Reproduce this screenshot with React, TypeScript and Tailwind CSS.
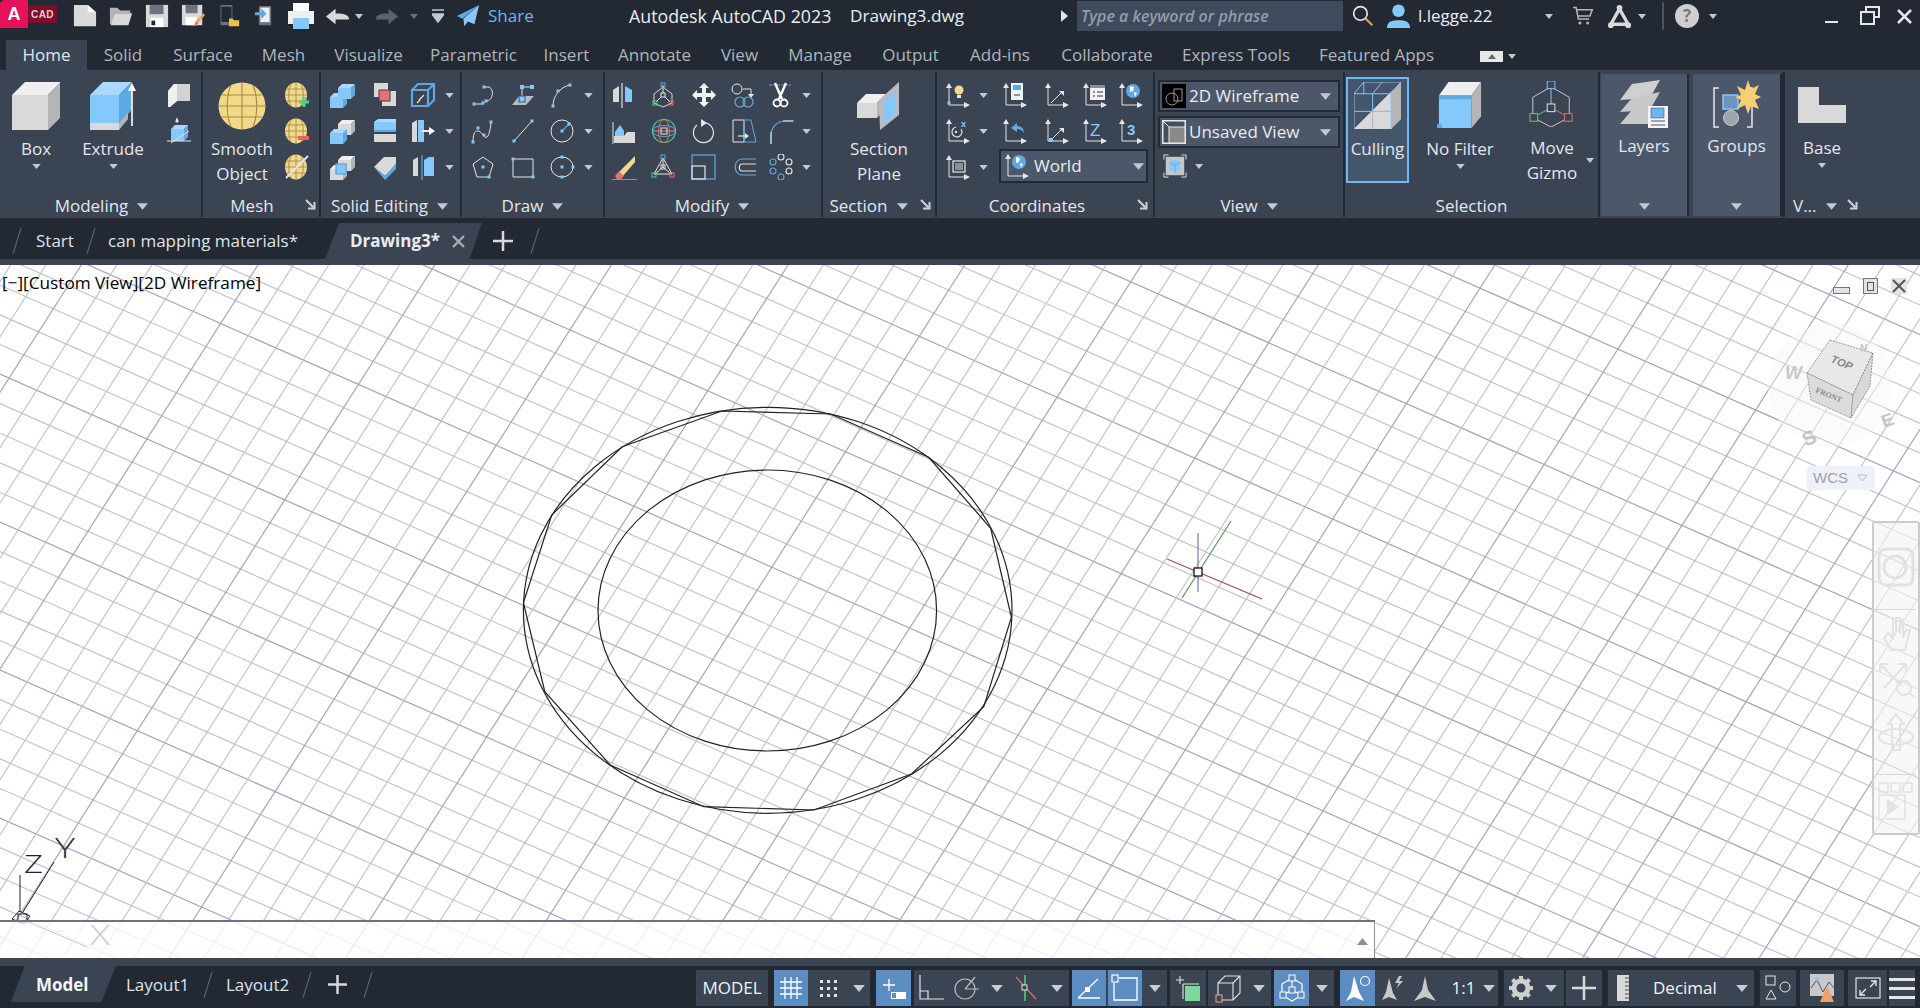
import React from 'react';

const G = '#d9d9d9', L = '#efefef', D = '#b5b5b5', B = '#85c8fb', BD = '#5fa9e3', BL = '#a9d9fd', E = '#e6e6e6', Y = '#f2d98a', YD = '#a98a45';

const Cube = ({ x, y, w, h, d, f = G, t = L, s = D }: { x: number; y: number; w: number; h: number; d: number; f?: string; t?: string; s?: string }) => (
  <>
    <polygon points={`${x},${y + d} ${x + d},${y} ${x + w + d},${y} ${x + w},${y + d}`} fill={t} />
    <polygon points={`${x + w},${y + d} ${x + w + d},${y} ${x + w + d},${y + h} ${x + w},${y + h + d}`} fill={s} />
    <rect x={x} y={y + d} width={w} height={h} fill={f} />
  </>
);

const I = ({ s = 26, v = 26, h, children }: { s?: number; v?: number; h?: number; children: React.ReactNode }) => (
  <svg width={s} height={h ?? s} viewBox={`0 0 ${v} ${v}`} fill="none" className="block shrink-0">{children}</svg>
);

const Caret = ({ w = 9, c = '#c4c9d1' }: { w?: number; c?: string }) => (
  <svg width={w} height={Math.round(w * 0.6)} viewBox="0 0 10 6" className="block shrink-0"><path d="M0 0h10L5 6z" fill={c} /></svg>
);

const Launcher = () => (
  <svg width="11" height="11" viewBox="0 0 11 11" className="block"><path d="M1 1l7 7M9.5 3v6.5H3" stroke="#cfd3d8" strokeWidth="2" fill="none" /></svg>
);

const Slash = ({ h = 'h-[26px]' }: { h?: string }) => (
  <svg viewBox="0 0 10 26" preserveAspectRatio="none" className={`w-[10px] shrink-0 ${h}`}><path d="M1 26L9 0" stroke="#56606e" strokeWidth="1.2" /></svg>
);

const Pt = ({ x, y, s = 3, c = B }: { x: number; y: number; s?: number; c?: string }) => <rect x={x - s / 2} y={y - s / 2} width={s} height={s} fill={c} />;

const Sphere = ({ extra }: { extra?: React.ReactNode }) => (
  <I s={26}>
    <ellipse cx="12" cy="13" rx="11" ry="12.5" fill={Y} />
    <path d="M1 13h22M2.5 7h19M2.5 19h19M12 1v24M7 2c-3 6-3 16 0 22M17 2c3 6 3 16 0 22" stroke={YD} strokeWidth=".9" />
    {extra}
  </I>
);

function Ax() {
  return <><path d="M4 4v19h16" stroke={E} strokeWidth="1" /><path d="M1 6l3-5 3 5z" fill={E} /><path d="M19 20l6 3-6 3z" fill={E} /></>;
}

/* ribbon small icons */
const icons: Record<string, React.ReactNode> = {
  polysolid: <I><path d="M2 9l6-7h16v17H11l-7 6H2z" fill="#d2d2d2" /><path d="M8 2h3v17l-7 6H2V9z" fill="#f0f0f0" /></I>,
  planecube: <I><Cube x={5} y={7} w={13} h={12} d={4} f={B} t={BL} s={BD} /><path d="M1 23h24M5 25L23 13M11 5V0" stroke={E} strokeWidth="1" /><path d="M9 4l2-4 2 4z" fill={E} /></I>,
  meshPlus: <Sphere extra={<path d="M15 20h10M20 15v10" stroke="#55d083" strokeWidth="3" />} />,
  meshMinus: <Sphere extra={<rect x="14" y="18" width="11" height="4" fill="#e8635f" />} />,
  meshSlash: <Sphere extra={<path d="M2 24L24 2" stroke="#e6e6e6" strokeWidth="2" />} />,
  union: <I><Cube x={1} y={11} w={13} h={11} d={4} f={B} t={BL} s={BD} /><Cube x={9} y={2} w={13} h={11} d={4} f={B} t={BL} s={BD} /></I>,
  subtract: <I><rect x="2" y="1" width="14" height="14" fill={G} /><rect x="10" y="9" width="14" height="15" fill={G} /><rect x="7" y="8" width="11" height="11" fill="#e8706d" stroke="#3b4453" strokeWidth="1" /></I>,
  wirecube: <I><path d="M2 8l6-6h16v16l-6 6H2zM2 8h16v16M18 8l6-6" stroke={BD} strokeWidth="2.2" /><path d="M9 18l5-5M7 21l3-3" stroke={E} strokeWidth="1.2" /></I>,
  intersect: <I><Cube x={9} y={2} w={13} h={11} d={4} /><Cube x={1} y={11} w={13} h={11} d={4} f={B} t={BL} s={BD} /></I>,
  sliced: <I><rect x="2" y="4" width="22" height="8" fill={B} /><polygon points="2,4 6,1 24,1 24,4" fill={BL} /><rect x="2" y="12" width="22" height="2" fill={BD} /><rect x="2" y="16" width="22" height="8" fill={G} /></I>,
  pushpull: <I><path d="M2 5l5-3v22H2z" fill={G} /><path d="M8 2l6 0v22H8z" fill={B} /><path d="M12 13h9" stroke="#fff" strokeWidth="1.8" /><path d="M19 9l6 4-6 4z" fill="#fff" /></I>,
  xor: <I><Cube x={9} y={2} w={13} h={11} d={4} /><Cube x={1} y={11} w={13} h={11} d={4} /><rect x="7" y="10" width="10" height="10" fill={B} stroke={BD} strokeWidth="1.4" /></I>,
  thicken: <I><path d="M2 13L12 3h12v7L13 22z" fill={G} /><path d="M2 13l11 9 11-12v5L13 26z" fill={BD} /></I>,
  split: <I><path d="M3 6l5-3v19H3z" fill={G} /><path d="M14 6l5-3h5v19H14z" fill={B} /><path d="M12 1v25" stroke={BD} strokeWidth="1.2" /></I>,
  polyline: <I><path d="M5 22h8M14 5h4c6 0 6 13-1 14" stroke={E} strokeWidth="1" /><Pt x={4} y={22} /><Pt x={13} y={21} /><Pt x={14} y={5} /><Pt x={16} y={19} /></I>,
  planar: <I><path d="M2 23l7-9h15l-8 9z" fill="#b7bcc4" /><path d="M12 5h10M12 5v14" stroke={E} strokeWidth="1" /><Pt x={12} y={5} s={4} /><Pt x={22} y={5} s={4} /><rect x="9" y="14" width="6" height="6" fill={B} stroke="#2d5a80" /></I>,
  arc: <I><path d="M4 24C4 14 11 5 21 3" stroke={E} strokeWidth="1" /><Pt x={4} y={24} /><Pt x={9} y={9} /><Pt x={21} y={3} /></I>,
  spline: <I><path d="M3 24c0-14 6-13 10-7s7 0 8-13" stroke={E} strokeWidth="1" /><Pt x={3} y={24} /><Pt x={8} y={10} /><Pt x={14} y={17} /><Pt x={21} y={4} /></I>,
  line: <I><path d="M4 23L22 3" stroke={E} strokeWidth="1" /><Pt x={4} y={23} /><Pt x={22} y={3} /></I>,
  circle: <I><circle cx="13" cy="13" r="11" stroke={E} strokeWidth="1" /><path d="M13 13l7-7" stroke={BD} strokeWidth="1.2" /><Pt x={13} y={13} /><Pt x={20} y={6} /></I>,
  polygon: <I><path d="M13 3l10 7-4 13H7L3 10z" stroke={E} strokeWidth="1" /><Pt x={13} y={13} /><Pt x={19} y={23} /></I>,
  rect: <I><path d="M3 5h20v18H3z" stroke={E} strokeWidth="1" /><Pt x={3} y={5} /><Pt x={23} y={23} /></I>,
  ellipse: <I><ellipse cx="13" cy="13" rx="11" ry="10" stroke={E} strokeWidth="1" /><Pt x={13} y={3} /><Pt x={13} y={13} /><Pt x={24} y={13} /><Pt x={13} y={23} /></I>,
  mirror: <I><path d="M2 8l6-4v16H2z" fill={G} /><path d="M14 4l7 4v12h-7z" fill={B} /><path d="M11 1v25" stroke={E} strokeWidth="1.2" /></I>,
  fillet3: <I><path d="M2 4v23" stroke={E} strokeWidth="1" /><path d="M4 14l5-7 4 6v5H4z" fill={B} /><path d="M3 25v-7h10l3-4h8v11z" fill={G} /></I>,
  erase: <I><path d="M8 18L24 2v6L12 22z" fill={Y} /><path d="M4 22l4-5 5 5-3 3H6z" fill="#e8706d" /><path d="M1 26h26" stroke={E} strokeWidth="1" /></I>,
  gizmoMove: <I><path d="M12 5L3 12v9l9 4 9-4v-9z" stroke={E} strokeWidth=".9" /><path d="M12 3v10M12 13l-7 7M12 13l7 7" stroke={E} strokeWidth="1" /><rect x="10" y="1" width="4" height="4" stroke={BD} /><rect x="10" y="11" width="4" height="4" fill="#3b4453" stroke={E} /><rect x="2" y="19" width="4" height="4" stroke="#55d083" /><rect x="18" y="19" width="4" height="4" stroke="#e8706d" /></I>,
  move: <I><path d="M13 1l5 5h-3v5h5V8l5 5-5 5v-3h-5v5h3l-5 5-5-5h3v-5H6v3l-5-5 5-5v3h5V6H8z" fill="#f2f2f2" /></I>,
  copy: <I><circle cx="6" cy="7" r="5" stroke={E} strokeWidth="1" /><path d="M12 7h8v6" stroke={E} /><path d="M17 12l3 4 3-4z" fill={E} /><circle cx="9" cy="20" r="5" stroke={BD} strokeWidth="1.2" /><circle cx="17" cy="20" r="5" stroke={BD} strokeWidth="1.2" /></I>,
  trim: <I><path d="M1 3h22" stroke={BD} strokeWidth="1.2" strokeDasharray="3 1" /><path d="M7 1l7 16M18 1l-7 16" stroke="#fff" strokeWidth="2.4" /><circle cx="9" cy="21" r="3.5" stroke="#fff" strokeWidth="1.8" /><circle cx="16" cy="21" r="3.5" stroke="#fff" strokeWidth="1.8" /></I>,
  rotate3d: <I><circle cx="13" cy="13" r="11.5" stroke="#55d083" strokeWidth="1.2" /><path d="M2 13h22" stroke="#e8706d" strokeWidth="1.2" /><ellipse cx="13" cy="13" rx="5.5" ry="11.5" stroke="#e8706d" strokeWidth="1" /><ellipse cx="13" cy="13" rx="11.5" ry="5.5" stroke={BD} strokeWidth="1" /><rect x="10" y="10" width="6" height="6" stroke={E} /></I>,
  rotate: <I><path d="M15 5A10 10 0 1 1 6 7" stroke={E} strokeWidth="1.2" /><path d="M10 1l6 4-6 4z" fill={E} /></I>,
  stretch: <I><path d="M2 2h11v22H2z" stroke={E} strokeWidth="1" /><path d="M13 2h7l5 22H13z" stroke={BD} strokeWidth="1" /><path d="M7 18h8" stroke={E} strokeWidth="1.2" /><path d="M14 15l4 3-4 3z" fill={E} /></I>,
  fillet: <I><path d="M3 26V18C3 9 9 3 18 3h8" stroke={BD} strokeWidth="1.2" /><path d="M3 26V14M15 3h10" stroke={E} strokeWidth="1" /></I>,
  gizmoScale: <I><path d="M12 4L3 20h18z" stroke={E} strokeWidth="1" /><path d="M12 4v9M12 13l-8 7M12 13l8 7" stroke={E} /><rect x="10" y="1" width="4" height="4" stroke={BD} /><rect x="10" y="11" width="4" height="4" stroke={E} /><rect x="1" y="19" width="4" height="4" stroke="#55d083" /><rect x="19" y="19" width="4" height="4" stroke="#e8706d" /></I>,
  scale: <I><rect x="1" y="1" width="23" height="24" stroke={BD} strokeWidth="1.2" /><rect x="1" y="12" width="13" height="13" stroke={E} strokeWidth="1.2" /></I>,
  offset: <I><path d="M25 5H11c-9 0-9 16 0 16h14" stroke={BD} strokeWidth="1.2" /><path d="M25 10H11c-3.500 0-3.500 7 0 7h14" stroke={E} strokeWidth="1.2" /></I>,
  array: <I>{[[13, 3], [5, 8], [21, 8], [5, 17], [21, 17], [13, 23]].map(([x, y], i) => <circle key={i} cx={x} cy={y} r="3" stroke={i % 2 ? BD : E} strokeWidth="1.1" />)}</I>,
  ucsLight: <I><Ax /><circle cx="14" cy="8" r="4.500" fill={Y} /><path d="M12 13h4v3h-4z" fill={E} /><Pt x={4} y={21} s={3} /></I>,
  ucsX: <I><Ax /><path d="M16 11a5 5 0 1 1-5-2" stroke={E} strokeWidth="1.2" /><circle cx="11" cy="14" r="1.200" fill={E} /><text x="16" y="9" fontSize="9" fontWeight="700" fontFamily="Liberation Sans" fill={B}>x</text></I>,
  ucsRect: <I><Ax /><rect x="8" y="7" width="12" height="11" stroke={E} strokeWidth="1.2" /><rect x="10" y="9" width="8" height="7" fill="#8a8f97" /></I>,
  ucsCalc: <I><Ax /><rect x="9" y="1" width="12" height="17" fill="#f2f2f2" /><rect x="11" y="3" width="8" height="5" fill={BD} /><path d="M12 13h6" stroke="#333" /></I>,
  ucsBack: <I><Ax /><path d="M9 10l6-5v3c5 0 7 3 7 7-2-3-4-4-7-4v3z" fill={BD} /></I>,
  ucsAngle: <I><Ax /><path d="M7 21l12-12" stroke={E} strokeWidth="1" /><path d="M15 9h5v5z" fill={E} /></I>,
  ucsAngle2: <I><Ax /><path d="M9 20l10-10" stroke={E} strokeWidth="1" /><path d="M15 10h5v5z" fill={E} /><Pt x={7} y={22} s={4} /></I>,
  ucsList: <I><Ax /><rect x="8" y="3" width="15" height="15" fill="#f2f2f2" /><rect x="8" y="3" width="15" height="3" fill="#8a8f97" /><path d="M11 10h2M15 10h6M11 14h2M15 14h6" stroke="#333" /></I>,
  ucsGlobe: <I><Ax /><circle cx="15" cy="9" r="7" fill="#5fa9e3" /><path d="M12 4l4 1-1 4-3 1zM16 10l3 1-2 4z" fill="#fff" /></I>,
  ucsZ: <I><Ax /><text x="8" y="18" fontSize="17" fontFamily="Liberation Sans" fill={B}>Z</text></I>,
  ucs3: <I><Ax /><text x="9" y="17" fontSize="15" fontWeight="700" fontFamily="Liberation Sans" fill={B}>3</text></I>,
  visual: <I s={24}><path d="M1 6V1h5M20 1h5v5M25 20v5h-5M6 25H1v-5" stroke={E} strokeWidth="1" /><rect x="3" y="3" width="20" height="20" fill="#c4c6ca" /><path d="M13 6l6 3v8l-6 3-6-3V9z" fill={B} /><path d="M7 9l6 3 6-3M13 12v8" stroke={BD} /></I>,
};

const Cell = ({ n, w }: { n: string; w: string }) => <div className={`flex items-center justify-center h-[36px] ${w}`}>{icons[n]}</div>;
const CCell = ({ w }: { w: string }) => <div className={`flex items-center justify-center h-[36px] ${w}`}><Caret /></div>;

const Label = ({ children }: { children: React.ReactNode }) => <div className="h-[25px] leading-[25px] text-[17px] text-[#e3e7eb] whitespace-nowrap text-center">{children}</div>;

const Large = ({ w, icon, lines, caret }: { w: string; icon: React.ReactNode; lines: string[]; caret?: boolean }) => (
  <div className={`flex flex-col items-center ${w}`}>
    <div className="h-[54px] flex items-start justify-center">{icon}</div>
    {lines.map(l => <Label key={l}>{l}</Label>)}
    {caret && <div className="mt-[3px]"><Caret /></div>}
  </div>
);

const Panel = ({ w, title, caret = true, launcher, tcls = '', body = 'pt-[12px]', children }: { w: string; title: string; caret?: boolean; launcher?: string; tcls?: string; body?: string; children: React.ReactNode }) => (
  <div className={`relative h-full flex flex-col shrink-0 ${w}`}>
    <div className={`h-[124px] flex ${body}`}>{children}</div>
    <div className={`h-[24px] flex items-center justify-center gap-[9px] ${tcls}`}>
      <span className="text-[17px] text-[#e3e7eb] whitespace-nowrap leading-[24px]">{title}</span>
      {caret && <Caret w={11} />}
    </div>
    {launcher && <div className={`absolute bottom-[8px] ${launcher}`}><Launcher /></div>}
  </div>
);

const Sep = () => <div className="w-[2px] h-[145px] mt-[2px] bg-[#222933] shrink-0" />;

const Combo = ({ icon, text, cls }: { icon: React.ReactNode; text: string; cls?: string }) => (
  <div className={`flex items-center h-[32px] bg-[#4c5869] border-2 border-[#222933] pl-[2px] pr-[7px] ${cls ?? ''}`}>
    {icon}
    <span className="ml-[3px] text-[17px] text-[#e8ecf0] whitespace-nowrap">{text}</span>
    <div className="ml-auto"><Caret w={11} /></div>
  </div>
);

const tabs: { t: string; w: string }[] = [
  { t: 'Solid', w: 'w-[72px]' }, { t: 'Surface', w: 'w-[88px]' }, { t: 'Mesh', w: 'w-[73px]' }, { t: 'Visualize', w: 'w-[97px]' },
  { t: 'Parametric', w: 'w-[113px]' }, { t: 'Insert', w: 'w-[73px]' }, { t: 'Annotate', w: 'w-[103px]' }, { t: 'View', w: 'w-[67px]' },
  { t: 'Manage', w: 'w-[94px]' }, { t: 'Output', w: 'w-[87px]' }, { t: 'Add-ins', w: 'w-[92px]' }, { t: 'Collaborate', w: 'w-[122px]' },
  { t: 'Express Tools', w: 'w-[136px]' }, { t: 'Featured Apps', w: 'w-[145px]' },
];

function TitleBar() {
  return (
    <div className="h-[40px] flex items-center bg-[#222933] shrink-0 pb-[8px]">
      <div className="flex items-start h-[32px] w-[57px] shrink-0">
        <div className="w-[28px] h-[28px] bg-[#e5125a] flex items-center justify-center text-white font-bold text-[18px] font-['Liberation_Sans',sans-serif] [clip-path:polygon(12%_0,100%_0,100%_100%,0_100%,0_10%)]">A</div>
        <div className="w-[29px] h-[18px] mt-[5px] bg-[#7a0f2e] flex items-center justify-center text-[#f3c6d1] font-bold text-[10px] tracking-[0.5px] font-['Liberation_Sans',sans-serif]">CAD</div>
      </div>
      <div className="ml-[16px]"><I s={24}><path d="M1 1h15l9 8v15H1z" fill={G} /><path d="M16 1v8h9z" fill="#fff" /></I></div>
      <div className="ml-[12px]"><I s={24}><path d="M1 4h8l3 3h11v3H6L3 22H1z" fill={D} /><path d="M6 10h19l-4 13H2z" fill={G} /></I></div>
      <div className="ml-[12px]"><I s={24}><rect x="1" y="1" width="24" height="24" fill={G} /><rect x="5" y="1" width="15" height="10" fill="#6b7280" /><rect x="6" y="15" width="14" height="10" fill="#fff" /><rect x="7" y="18" width="4" height="5" fill="#222" /></I></div>
      <div className="ml-[12px]"><I s={24}><rect x="1" y="1" width="22" height="22" fill={G} /><rect x="5" y="1" width="13" height="9" fill="#6b7280" /><rect x="5" y="14" width="12" height="9" fill="#fff" /><path d="M14 24l2-5 8-9 2 2-8 9z" fill="#e9a75d" /><path d="M14 24l2-5 3 2z" fill="#e8706d" /></I></div>
      <div className="ml-[13px]"><I s={22}><rect x="3" y="0" width="14" height="24" rx="1" fill="#6b7280" /><rect x="4" y="2" width="12" height="18" fill="#222933" /><path d="M13 16h4l2 2h6v7H13z" fill="#f0c04a" /></I></div>
      <div className="ml-[15px]"><I s={20}><rect x="5" y="0" width="16" height="25" rx="1" fill="#6b7280" /><rect x="7" y="2" width="12" height="19" fill={L} /><path d="M0 8h8V3l7 7-7 7v-5H0z" fill={BD} /></I></div>
      <div className="ml-[13px]"><I s={26}><rect x="5" y="0" width="16" height="8" fill="#fff" /><rect x="0" y="8" width="26" height="13" fill={L} /><rect x="5" y="15" width="16" height="11" fill={B} /></I></div>
      <div className="ml-[11px]"><I s={25}><path d="M11 5L1 13l10 8v-5h14c0-4-4-6-14-6z" fill={G} /></I></div>
      <div className="ml-[5px]"><Caret w={8} /></div>
      <div className="ml-[12px]"><I s={25}><path d="M14 5l10 8-10 8v-5H1c0-4 3-6 13-6z" fill="#59626e" /></I></div>
      <div className="ml-[10px]"><Caret w={8} c="#6b7280" /></div>
      <div className="ml-[14px]"><svg width="12" height="15" viewBox="0 0 12 15" className="block"><path d="M0 1h12M0 5h12L6 13z" stroke="#c4c9d1" strokeWidth="1.5" fill="#c4c9d1" /></svg></div>
      <div className="ml-[12px]"><I s={24}><path d="M25 1L1 13l6 3z" fill={BD} /><path d="M25 1L8 16l1 8 4-5 7 3z" fill={B} /></I></div>
      <div className="ml-[8px] w-[44px] text-[17px] text-[#6cb6ee] whitespace-nowrap">Share</div>
      <div className="ml-[97px] w-[201px] text-[17.8px] text-[#e8edf2] whitespace-nowrap">Autodesk AutoCAD 2023</div>
      <div className="ml-[20px] w-[115px] text-[17.2px] text-[#e8edf2] whitespace-nowrap">Drawing3.dwg</div>
      <div className="ml-[96px]"><svg width="7" height="12" viewBox="0 0 7 12" className="block"><path d="M0 0l7 6-7 6z" fill="#e3e7eb" /></svg></div>
      <div className="ml-[9px] w-[266px] h-[30px] bg-[#3f4a5c] flex items-center pl-[4px] text-[16px] italic text-[#929dab] whitespace-nowrap font-semibold">Type a keyword or phrase</div>
      <div className="ml-[9px]"><I s={22}><circle cx="10" cy="10" r="8" stroke={E} strokeWidth="2" /><path d="M16 16l8 8" stroke="#d9a15c" strokeWidth="2.5" /></I></div>
      <div className="ml-[12px]"><I s={25}><circle cx="13" cy="7" r="6.500" fill={B} /><path d="M1 25c0-7 6-8 12-8s12 1 12 8z" fill={B} /></I></div>
      <div className="ml-[7px] w-[76px] text-[17px] text-[#e8edf2] whitespace-nowrap">l.legge.22</div>
      <div className="ml-[51px]"><Caret w={8} /></div>
      <div className="ml-[20px]"><I s={20}><path d="M0 2h4l3 15h14M5 5h20l-3 8H7" stroke={D} strokeWidth="2" fill="none" /><circle cx="9" cy="22" r="2" fill={D} /><circle cx="19" cy="22" r="2" fill={D} /></I></div>
      <div className="ml-[14px]"><I s={25}><path d="M13 5L4 21h18z" stroke={G} strokeWidth="3.500" /><circle cx="13" cy="4" r="3" fill={G} /><circle cx="4" cy="22" r="3" fill={G} /><circle cx="22" cy="22" r="3" fill={G} /></I></div>
      <div className="ml-[6px]"><Caret w={8} /></div>
      <div className="ml-[16px] w-[2px] h-[28px] bg-[#4a5464]" />
      <div className="ml-[11px] w-[24px] h-[24px] rounded-full bg-[#cfcfcf] flex items-center justify-center text-[#7a7a7a] font-bold text-[17px]">?</div>
      <div className="ml-[10px]"><Caret w={8} /></div>
      <div className="ml-[108px] w-[13px] h-[2px] mt-[12px] bg-[#e3e7eb]" />
      <div className="ml-[22px]"><svg width="20" height="20" viewBox="0 0 20 20" className="block"><path d="M6 5V1h13v10h-5M1 6h13v12H1z" stroke="#e3e7eb" strokeWidth="2" fill="none" /></svg></div>
      <div className="ml-[17px]"><svg width="15" height="15" viewBox="0 0 15 15" className="block"><path d="M1 1l13 13M14 1L1 14" stroke="#e3e7eb" strokeWidth="2.5" /></svg></div>
    </div>
  );
}

function TabRow() {
  return (
    <div className="h-[30px] flex bg-[#222933] shrink-0 pl-[6px] items-stretch">
      <div className="w-[81px] bg-[#3b4453] flex items-center justify-center text-[17px] text-[#dfe8f0]">Home</div>
      {tabs.map(t => <div key={t.t} className={`${t.w} flex items-center justify-center text-[17px] text-[#aeb5be] whitespace-nowrap`}>{t.t}</div>)}
      <div className="ml-[31px] w-[23px] h-[11px] mt-[11px] bg-[#e8e8e8] flex items-center justify-center"><svg width="8" height="5" viewBox="0 0 10 6" className="block"><path d="M0 6h10L5 0z" fill="#666" /></svg></div>
      <div className="ml-[5px] mt-[14px]"><Caret w={8} /></div>
    </div>
  );
}

function Ribbon() {
  return (
    <div className="h-[148px] flex bg-[#3b4453] shrink-0">
      <Panel w="w-[201px]" title="Modeling" tcls="pl-[2px]">
        <Large w="w-[72px]" caret lines={['Box']} icon={<I s={48} v={48}><Cube x={0} y={0} w={36} h={35} d={13} f={G} t={L} s={D} /></I>} />
        <Large w="w-[82px]" caret lines={['Extrude']} icon={<I s={48} v={48}><Cube x={1} y={0} w={29} h={28} d={13} f={B} t={BL} s={BD} /><rect x="1" y="41" width="29" height="7" fill={G} /><polygon points="30,41 39,31 39,37 30,48" fill={D} /><path d="M43 6v38" stroke="#fff" strokeWidth="1.600" /><path d="M39 9l4-8 4 8z" fill="#fff" /></I>} />
        <div className="flex flex-col -mt-[5px] w-[36px] ml-[7px]">
          <Cell n="polysolid" w="w-[36px]" />
          <Cell n="planecube" w="w-[36px]" />
        </div>
      </Panel>
      <Sep />
      <Panel w="w-[116px]" title="Mesh" caret={false} launcher="right-[3px]" tcls="pr-[18px]">
        <Large w="w-[78px]" lines={['Smooth', 'Object']} icon={<I s={48} v={48}><ellipse cx="24" cy="24" rx="23.500" ry="23.500" fill={Y} /><path d="M1 24h46M4 13h40M4 35h40M24 1v46M13 3c-5 12-5 30 0 42M35 3c5 12 5 30 0 42" stroke={YD} strokeWidth="1.100" /></I>} />
        <div className="flex flex-col -mt-[5px] w-[36px] -ml-[2px]">
          <Cell n="meshPlus" w="w-[36px]" />
          <Cell n="meshMinus" w="w-[36px]" />
          <Cell n="meshSlash" w="w-[36px]" />
        </div>
      </Panel>
      <Sep />
      <Panel w="w-[139px]" title="Solid Editing" body="pt-[7px]" tcls="pr-[2px]">
        <div className="flex flex-col">
          {[['union', 'subtract', 'wirecube'], ['intersect', 'sliced', 'pushpull'], ['xor', 'thicken', 'split']].map((r, i) => (
            <div key={i} className="flex">
              <Cell n={r[0]} w="w-[42px]" /><Cell n={r[1]} w="w-[44px]" /><Cell n={r[2]} w="w-[32px]" /><CCell w="w-[20px]" />
            </div>
          ))}
        </div>
      </Panel>
      <Sep />
      <Panel w="w-[141px]" title="Draw" body="pt-[7px]">
        <div className="flex flex-col">
          {[['polyline', 'planar', 'arc'], ['spline', 'line', 'circle'], ['polygon', 'rect', 'ellipse']].map((r, i) => (
            <div key={i} className="flex">
              <Cell n={r[0]} w="w-[42px]" /><Cell n={r[1]} w="w-[37px]" /><Cell n={r[2]} w="w-[42px]" /><CCell w="w-[10px]" />
            </div>
          ))}
        </div>
      </Panel>
      <Sep />
      <Panel w="w-[216px]" title="Modify" body="pt-[7px]" tcls="pr-[2px]">
        <div className="flex flex-col">
          {[['mirror', 'gizmoMove', 'move', 'copy', 'trim'], ['fillet3', 'rotate3d', 'rotate', 'stretch', 'fillet'], ['erase', 'gizmoScale', 'scale', 'offset', 'array']].map((r, i) => (
            <div key={i} className="flex">
              <Cell n={r[0]} w="w-[38px]" /><Cell n={r[1]} w="w-[42px]" /><Cell n={r[2]} w="w-[38px]" /><Cell n={r[3]} w="w-[42px]" /><Cell n={r[4]} w="w-[32px]" /><CCell w="w-[18px]" />
            </div>
          ))}
        </div>
      </Panel>
      <Sep />
      <Panel w="w-[112px]" title="Section" launcher="right-[4px]" tcls="pr-[21px]">
        <Large w="w-[112px]" lines={['Section', 'Plane']} icon={<I s={48} v={48}><Cube x={2} y={12} w={20} h={15} d={9} /><polygon points="24,18 44,0 44,33 25,48" fill="#b9bcc2" /><polygon points="28,21 41,9 41,31 28,42" fill={B} /></I>} />
      </Panel>
      <Sep />
      <Panel w="w-[216px]" title="Coordinates" caret={false} launcher="right-[5px]" tcls="pr-[16px]" body="pt-[7px]">
        <div className="flex flex-col">
          <div className="flex">
            <Cell n="ucsLight" w="w-[42px]" /><CCell w="w-[8px]" /><Cell n="ucsCalc" w="w-[56px]" /><Cell n="ucsAngle" w="w-[28px]" /><Cell n="ucsList" w="w-[48px]" /><Cell n="ucsGlobe" w="w-[24px]" />
          </div>
          <div className="flex">
            <Cell n="ucsX" w="w-[42px]" /><CCell w="w-[8px]" /><Cell n="ucsBack" w="w-[56px]" /><Cell n="ucsAngle2" w="w-[28px]" /><Cell n="ucsZ" w="w-[48px]" /><Cell n="ucs3" w="w-[24px]" />
          </div>
          <div className="flex">
            <Cell n="ucsRect" w="w-[42px]" /><CCell w="w-[8px]" />
            <div className="ml-[12px] w-[149px] h-[34px] bg-[#4c5869] border-2 border-[#222933] flex items-center pl-[3px] pr-[2px]">
              {icons.ucsGlobe}
              <span className="ml-[4px] text-[17px] text-[#e8ecf0]">World</span>
              <div className="ml-auto"><Caret w={11} /></div>
            </div>
          </div>
        </div>
      </Panel>
      <Sep />
      <Panel w="w-[188px]" title="View" body="pt-[10px]">
        <div className="flex flex-col w-full pl-[3px] pr-[3px] gap-[4px]">
          <Combo text="2D Wireframe" icon={<svg width="24" height="24" viewBox="0 0 24 24" className="block shrink-0"><rect width="24" height="24" fill="#000" /><circle cx="10" cy="15" r="6" stroke="#999" fill="none" /><rect x="12" y="5" width="8" height="12" stroke="#999" fill="none" /></svg>} />
          <Combo text="Unsaved View" icon={<svg width="24" height="24" viewBox="0 0 24 24" className="block shrink-0"><rect width="24" height="24" fill="#e8e8e8" /><rect x="1" y="1" width="22" height="22" fill="#44505f" stroke="#e8e8e8" /><rect x="7" y="7" width="16" height="16" fill="#8a8a8a" stroke="#e8e8e8" /><path d="M1 1l6 6" stroke="#e8e8e8" /></svg>} />
          <div className="flex items-center pl-[5px] gap-[8px] h-[28px]">{icons.visual}<Caret w={8} /></div>
        </div>
      </Panel>
      <Sep />
      <Panel w="w-[253px]" title="Selection" caret={false} body="pt-[7px]">
        <div className="w-[63px] h-[106px] ml-[1px] border-2 border-[#6fb8f0] bg-[#44566b] flex flex-col items-center pt-[3px] shrink-0">
          <div className="h-[54px]"><I s={47} v={48}><polygon points="0,48 38,10 48,0 48,38 38,48" fill={D} /><polygon points="0,48 38,10 38,48" fill={G} /><path d="M0 12h38v36M0 12l10-12h38L38 12M0 48V12M38 12V48M0 30h38M19 12v18M10 0v12M29 0l-10 12" stroke={B} strokeWidth="1" /><path d="M19 30v18M38 30H19" stroke={D} /></I></div>
          <Label>Culling</Label>
        </div>
        <div className="mt-[5px]">
          <Large w="w-[102px]" caret lines={['No Filter']} icon={<I s={46} v={48}><polygon points="2,14 12,0 46,0 36,14" fill={L} /><polygon points="36,14 46,0 46,36 36,48" fill={D} /><rect x="2" y="14" width="34" height="34" fill={B} /><rect x="2" y="14" width="34" height="4" fill={BD} /><rect x="0" y="44" width="5" height="5" fill={BD} /></I>} />
        </div>
        <div className="relative mt-[4px]">
          <Large w="w-[82px]" lines={['Move', 'Gizmo']} icon={<I s={46} v={48}><path d="M23 6L4 17v21l19 10 19-10V17z" stroke="#c9ccd1" strokeWidth="1" /><path d="M23 5v23" stroke={B} /><path d="M23 28L4 38" stroke="#55d083" /><path d="M23 28l19 10" stroke="#e8706d" /><rect x="19" y="0" width="8" height="8" fill="#3b4453" stroke={B} /><rect x="19" y="24" width="8" height="8" fill="#3b4453" stroke={E} /><rect x="1" y="34" width="8" height="8" fill="#3b4453" stroke="#55d083" /><rect x="37" y="34" width="8" height="8" fill="#3b4453" stroke="#e8706d" /></I>} />
          <div className="absolute right-[-1px] top-[77px]"><Caret w={8} /></div>
        </div>
      </Panel>
      <Sep />
      <div className="w-[88px] ml-[1px] h-[142px] mt-[4px] bg-[#4c5869] flex flex-col items-center pt-[6px] shrink-0 border-r-2 border-[#222933]">
        <div className="h-[50px]"><I s={48} v={48}><polygon points="0,20 12,4 40,0 30,18" fill="#d0d0d0" /><polygon points="0,32 12,18 40,12 30,30" fill="#c8c8c8" /><polygon points="0,44 12,30 34,28 30,44" fill="#c8c8c8" /><rect x="28" y="26" width="20" height="22" fill="#f4f4f4" /><rect x="31" y="28" width="13" height="10" fill="#6ab7f5" stroke="#444" strokeWidth=".5" /><path d="M31 41h14M31 45h14" stroke="#555" /></I></div>
        <div className="text-[17px] text-[#e3e7eb] leading-[24px] mt-[4px]">Layers</div>
        <div className="mt-auto mb-[6px]"><Caret w={11} /></div>
      </div>
      <div className="w-[4px] shrink-0 bg-[#3b4453]" />
      <div className="w-[89px] h-[142px] mt-[4px] bg-[#4c5869] flex flex-col items-center pt-[6px] shrink-0 border-r-2 border-[#222933]">
        <div className="h-[50px]"><I s={48} v={48}><path d="M6 8H1v39h5M34 47h5V8h-5" stroke="#e8e8e8" strokeWidth="1.500" /><rect x="10" y="15" width="15" height="14" fill="#6d93bd" stroke={B} strokeWidth="1.500" /><ellipse cx="18" cy="38" rx="7.500" ry="7.500" fill="#9ea4ac" stroke="#ccc" /><path d="M35 0l3 9 8-4-4 9 6 3-6 3 4 9-8-3-3 8-3-9-8 4 4-9-6-3 6-2-4-9 8 4z" fill="#f7cf73" /></I></div>
        <div className="text-[17px] text-[#e3e7eb] leading-[24px] mt-[4px]">Groups</div>
        <div className="mt-auto mb-[6px]"><Caret w={11} /></div>
      </div>
      <div className="w-[3px] h-[145px] mt-[2px] bg-[#222933] shrink-0" />
      <Panel w="w-[85px]" title="V..." launcher="left-[62px]" tcls="!justify-start pl-[8px]" body="pt-[12px]">
        <div className="flex flex-col items-center w-[72px] ml-[1px]">
          <div className="h-[53px] pt-[5px]"><svg width="48" height="36" viewBox="0 0 48 36" className="block"><path d="M0 0h21v18h27v18H0z" fill={G} /></svg></div>
          <Label>Base</Label>
          <div className="mt-[3px]"><Caret w={8} /></div>
        </div>
      </Panel>
    </div>
  );
}

function DocTabs() {
  return (
    <div className="h-[41px] flex items-end bg-[#222933] shrink-0 pl-[12px]">
      <div className="flex items-center h-[36px]">
        <Slash />
        <div className="ml-[14px] w-[36px] text-[17px] text-[#dfe3e8] whitespace-nowrap">Start</div>
        <div className="ml-[14px]"><Slash /></div>
        <div className="ml-[12px] w-[187px] text-[17px] text-[#dfe3e8] whitespace-nowrap">can mapping materials*</div>
      </div>
      <div className="ml-[30px] w-[157px] h-[36px] bg-[#3b4453] [clip-path:polygon(9%_0,100%_0,92%_100%,0_100%)] flex items-center pl-[25px] shrink-0">
        <span className="w-[90px] text-[17px] font-bold text-[#e8ecf0] whitespace-nowrap">Drawing3*</span>
        <span className="ml-[12px]"><svg width="13" height="13" viewBox="0 0 13 13" className="block"><path d="M1 1l11 11M12 1L1 12" stroke="#a8adb5" strokeWidth="2.4" /></svg></span>
      </div>
      <div className="flex items-center h-[36px]">
        <div className="ml-[11px]"><svg width="20" height="20" viewBox="0 0 20 20" className="block"><path d="M10 0v20M0 10h20" stroke="#d5d8dc" strokeWidth="2.5" /></svg></div>
        <div className="ml-[17px]"><Slash /></div>
      </div>
    </div>
  );
}

const range = (a: number, b: number) => Array.from({ length: b - a + 1 }, (_, i) => a + i);

function Canvas() {
  const aLines = range(-33, 20);
  const bLines = range(-8, 60);
  const outer = '722.1,411 830.6,414 928.7,457.3 990.7,528.3 1011.4,617.3 983.8,706.7 911.5,774 814,810 703.9,806.7 610.2,765 544.8,691.7 523.4,602.7 551.7,515 622.2,446.7';
  return (
    <svg viewBox="0 265 1920 693" width="1920" height="693" className="block">
      {aLines.map(i => {
        const c = 374 + 29.6 * i;
        const maj = i % 5 === 0;
        return <line key={`a${i}`} x1="0" y1={c} x2="1920" y2={c + 0.442 * 1920} stroke={maj ? '#a3a5ba' : '#bfc0c8'} strokeWidth={maj ? 1.2 : 1.1} />;
      })}
      {bLines.map(i => {
        const x0 = 258 + 35.34 * i;
        const maj = i % 5 === 0;
        return <line key={`b${i}`} x1={x0} y1="265" x2={x0 - 0.6386 * 693} y2="958" stroke={maj ? '#a3a5ba' : '#bfc0c8'} strokeWidth={maj ? 1.2 : 1.1} />;
      })}
      <ellipse cx="767.7" cy="610.3" rx="244.3" ry="203" stroke="#222" strokeWidth="1.2" fill="none" />
      <ellipse cx="767.3" cy="610.5" rx="169.3" ry="140.5" stroke="#222" strokeWidth="1.2" fill="none" />
      <polygon points={outer} stroke="#222" strokeWidth="1.2" fill="none" />
      {/* crosshair */}
      <line x1="1198" y1="533" x2="1198" y2="592" stroke="#5a5fa8" strokeWidth="1" />
      <line x1="1182" y1="598" x2="1231" y2="521" stroke="#5f9a62" strokeWidth="1.3" />
      <line x1="1167" y1="559" x2="1262" y2="599" stroke="#a0504f" strokeWidth="1.2" />
      <rect x="1194" y="568" width="8" height="8" fill="#fff" stroke="#000" strokeWidth="1.2" />
      {/* UCS icon */}
      <path d="M20 875V912M23 912L54 862" stroke="#222" strokeWidth="1" />
      <path d="M12 919l7-8 11 5-6 8z" stroke="#222" fill="none" strokeWidth="1" />
      <rect x="18" y="914" width="9" height="8" stroke="#222" fill="none" strokeWidth="1" />
      <path d="M26 921L87 947" stroke="#222" strokeWidth="1" />
      <text x="24" y="873" fontSize="25" fontFamily="Open Sans" fontWeight="300" fill="#222" textLength="19" lengthAdjust="spacingAndGlyphs">Z</text>
      <text x="55" y="858" fontSize="27" fontFamily="Open Sans" fontWeight="300" fill="#333" textLength="20" lengthAdjust="spacingAndGlyphs">Y</text>
      <text x="90" y="945" fontSize="27" fontFamily="Open Sans" fontWeight="300" fill="#333" textLength="20" lengthAdjust="spacingAndGlyphs">X</text>
      {/* view cube */}
      <g>
        <circle cx="1830" cy="385" r="62" fill="#f7f7f7" opacity=".45" />
        <polygon points="1830,340 1873,353 1853,395 1807,373" fill="#e8e8e8" stroke="#777" strokeDasharray="2 1" strokeWidth=".7" />
        <polygon points="1807,373 1853,395 1851,418 1811,400" fill="#dcdcdc" stroke="#777" strokeDasharray="2 1" strokeWidth=".7" />
        <polygon points="1873,353 1870,386 1851,418 1853,395" fill="#d8d8d8" stroke="#777" strokeDasharray="2 1" strokeWidth=".7" />
        <text x="1830" y="362" fontSize="11" fontStyle="italic" fontWeight="700" fontFamily="Liberation Sans" fill="#8a8a8a" transform="rotate(22 1830 362)">TOP</text>
        <text x="1815" y="392" fontSize="8" fontFamily="Liberation Serif" fontWeight="700" fill="#8a8a8a" transform="rotate(23 1815 392)">FRONT</text>
        <text x="1785" y="379" fontSize="18" fontWeight="700" fontStyle="italic" fontFamily="Liberation Sans" fill="#c8c8c8">W</text>
        <text x="1884" y="428" fontSize="18" fontWeight="700" fontFamily="Liberation Sans" fill="#c4c4c4" transform="rotate(-20 1884 428)">E</text>
        <text x="1806" y="447" fontSize="20" fontWeight="700" fontFamily="Liberation Sans" fill="#c4c4c4" transform="rotate(-25 1806 447)">S</text>
        <text x="1860" y="352" fontSize="10" fontWeight="700" fontFamily="Liberation Sans" fill="#c4c4c4">N</text>
      </g>
    </svg>
  );
}

function NavBar() {
  const c = '#e2e2e2';
  return (
    <div className="absolute left-[1872px] top-[256px] w-[48px] h-[314px] rounded-[3px] border-2 border-[#cccccc] bg-[#f3f3f3]/60 flex flex-col items-center pt-[24px]">
      <svg width="38" height="44" viewBox="0 0 38 44" className="block"><rect x="2" y="2" width="34" height="36" rx="7" stroke={c} strokeWidth="3" fill="none" /><circle cx="18" cy="20" r="11" stroke={c} strokeWidth="3" fill="none" /></svg>
      <div className="mt-[18px] w-[40px] h-[1px] bg-[#d8d8d8]" />
      <svg width="36" height="38" viewBox="0 0 36 38" className="block mt-[6px]"><path d="M6 22l7 12h14l5-20-4 0-3 8V4h-3v14V2h-4v16V4h-3v18l-5-5z" stroke={c} strokeWidth="2" fill="none" /></svg>
      <svg width="40" height="40" viewBox="0 0 40 40" className="block mt-[6px]"><path d="M4 4l22 22M30 4L8 28M4 4h8M4 4v8M30 4h-8M30 4v8" stroke={c} strokeWidth="2" fill="none" /><circle cx="28" cy="28" r="7" stroke={c} strokeWidth="2" fill="none" /><path d="M33 33l6 4" stroke={c} strokeWidth="2" /></svg>
      <svg width="40" height="48" viewBox="0 0 40 48" className="block mt-[12px]"><path d="M20 2l8 10h-4v26h-8V12h-4z" stroke={c} strokeWidth="2" fill="none" /><ellipse cx="20" cy="25" rx="17" ry="8" stroke={c} strokeWidth="2" fill="none" /></svg>
      <div className="mt-[14px] w-[40px] h-[1px] bg-[#d8d8d8]" />
      <svg width="38" height="40" viewBox="0 0 38 40" className="block mt-[6px]"><path d="M2 2h9v9H2zM14 2h9v9h-9zM26 2h9v9h-9z" stroke={c} fill="none" strokeWidth="1.500" /><rect x="2" y="14" width="26" height="24" stroke={c} strokeWidth="1.500" fill="none" /><path d="M10 18l12 8-12 8z" fill={c} /></svg>
    </div>
  );
}

const SI = ({ w, children, a }: { w: string; children: React.ReactNode; a?: boolean }) => (
  <div className={`${w} h-[36px] flex items-center justify-center shrink-0 ${a ? 'bg-[#5b8dc2]' : ''}`}>{children}</div>
);

const Sg = ({ w, children }: { w: string; children: React.ReactNode }) => (
  <div className={`${w} h-[36px] bg-[#3b4453] flex items-center shrink-0`}>{children}</div>
);

const SC = ({ w = 'w-[20px]' }: { w?: string }) => <div className={`${w} flex items-center justify-center`}><Caret w={12} c="#c9ccd1" /></div>;

function StatusBar() {
  return (
    <div className="h-[42px] flex items-start bg-[#222933] shrink-0 pl-[11px]">
      <div className="w-[105px] h-[36px] pt-[1px] bg-[#3b4453] [clip-path:polygon(13%_0,100%_0,86%_100%,0_100%)] flex items-center pl-[25px] text-[17px] font-bold text-[#f2f4f6] shrink-0">Model</div>
      <div className="h-[36px] pt-[1px] flex items-center text-[17px] text-[#dfe3e8] whitespace-nowrap">
        <span className="ml-[10px] w-[62px]">Layout1</span>
        <span className="ml-[15px]"><Slash /></span>
        <span className="ml-[13px] w-[62px]">Layout2</span>
        <span className="ml-[14px]"><Slash /></span>
        <span className="ml-[16px]"><svg width="19" height="19" viewBox="0 0 19 19" className="block"><path d="M9.500 0v19M0 9.500h19" stroke="#d5d8dc" strokeWidth="2.500" /></svg></span>
        <span className="ml-[16px]"><Slash /></span>
      </div>
      <div className="ml-auto mr-[5px] mt-[4px] flex">
        <Sg w="w-[72px]"><div className="w-full text-center text-[17px] text-[#f0f3f6] font-medium">MODEL</div></Sg>
        <div className="ml-[6px]"><Sg w="w-[96px]">
          <SI w="w-[34px]" a><svg width="24" height="24" viewBox="0 0 24 24" className="block"><path d="M1 6h22M1 12h22M1 18h22M6 1v22M12 1v22M18 1v22" stroke="#fff" strokeWidth="1.300" /></svg></SI>
          <SI w="w-[40px]"><svg width="18" height="18" viewBox="0 0 18 18" className="block">{[1, 8, 15].flatMap(y => [1, 8, 15].map(x => <rect key={`${x}${y}`} x={x} y={y} width="3" height="3" fill={E} />))}</svg></SI>
          <SC w="w-[22px]" />
        </Sg></div>
        <div className="ml-[6px]"><Sg w="w-[35px]"><SI w="w-[35px]" a><svg width="26" height="26" viewBox="0 0 26 26" className="block"><path d="M2 10h12M8 4v12" stroke="#fff" strokeWidth="1.300" /><rect x="10" y="17" width="15" height="7" fill="#fff" /><rect x="11" y="18" width="4" height="5" fill="#5b8dc2" /></svg></SI></Sg></div>
        <div className="ml-[3px]"><Sg w="w-[155px]">
          <SI w="w-[34px]"><svg width="26" height="28" viewBox="0 0 26 28" className="block"><path d="M2 1v24h24M2 17h8v8" stroke={E} strokeWidth="1.200" fill="none" /></svg></SI>
          <SI w="w-[38px]"><svg width="26" height="26" viewBox="0 0 26 26" className="block"><circle cx="11" cy="14" r="10" stroke="#bdbdbd" strokeWidth="1.200" fill="none" /><path d="M11 14h14M11 14L21 2" stroke="#bdbdbd" strokeWidth="1.200" /></svg></SI>
          <SC w="w-[22px]" />
          <SI w="w-[36px]"><svg width="22" height="26" viewBox="0 0 22 26" className="block"><path d="M1 2l20 22" stroke="#d9706e" strokeWidth="1.200" /><path d="M10 0v26" stroke="#55d083" strokeWidth="1.500" /><rect x="7" y="10" width="5" height="5" fill="#3b4453" stroke={E} /></svg></SI>
          <SC w="w-[25px]" />
        </Sg></div>
        <div className="ml-[3px]"><Sg w="w-[95px]">
          <SI w="w-[34px]" a><svg width="24" height="24" viewBox="0 0 24 24" className="block"><path d="M1 22h22M1 22L21 3" stroke="#fff" strokeWidth="1.300" /><rect x="8" y="11" width="5" height="5" fill="#fff" /></svg></SI>
          <div className="w-[2px]" />
          <SI w="w-[34px]" a><svg width="28" height="28" viewBox="0 0 28 28" className="block"><path d="M8 4h18v22H3V9" stroke="#fff" strokeWidth="1.300" fill="none" /><rect x="1" y="1" width="6" height="7" stroke="#fff" strokeWidth="1.200" fill="none" /></svg></SI>
          <SC w="w-[25px]" />
        </Sg></div>
        <div className="ml-[3px]"><Sg w="w-[36px]"><SI w="w-[36px]"><svg width="26" height="26" viewBox="0 0 26 26" className="block"><path d="M1 5h8M5 1v8M8 9h16M8 9v15" stroke={E} strokeWidth="1.100" fill="none" /><rect x="10" y="11" width="15" height="15" fill="#7fd89b" /></svg></SI></Sg></div>
        <div className="ml-[2px]"><Sg w="w-[63px]">
          <SI w="w-[40px]"><svg width="26" height="30" viewBox="0 0 26 30" className="block"><path d="M3 10l7-7h15v17l-7 7H3zM3 10h15v17M18 10l7-7" stroke={E} strokeWidth="1.100" fill="none" /><rect x="1" y="22" width="6" height="7" fill="#3b4453" stroke="#e9a77c" /></svg></SI>
          <SC w="w-[22px]" />
        </Sg></div>
        <div className="ml-[3px]"><Sg w="w-[60px]">
          <SI w="w-[35px]" a><svg width="26" height="28" viewBox="0 0 26 28" className="block"><path d="M13 4L3 10v11l10 6 10-6V10zM13 4v12M13 16l-9 5M13 16l9 5" stroke="#fff" strokeWidth="1.200" fill="none" /><rect x="10" y="1" width="6" height="6" stroke="#fff" fill="#5b8dc2" /><rect x="10" y="13" width="6" height="6" stroke="#fff" fill="#5b8dc2" /><rect x="1" y="18" width="6" height="6" stroke="#fff" fill="#5b8dc2" /><rect x="19" y="18" width="6" height="6" stroke="#fff" fill="#5b8dc2" /></svg></SI>
          <SC w="w-[25px]" />
        </Sg></div>
        <div className="ml-[6px]"><Sg w="w-[158px]">
          <SI w="w-[35px]" a><svg width="28" height="28" viewBox="0 0 28 28" className="block"><path d="M10 2l5 16 5 9-10-4-8 4 5-9z" fill="#fff" /><circle cx="21" cy="7" r="4.500" stroke="#fff" strokeWidth="1.200" fill="none" /></svg></SI>
          <SI w="w-[35px]"><svg width="26" height="26" viewBox="0 0 26 26" className="block"><path d="M9 3l4 15 4 7-8-3-7 3 4-8z" fill="#c9c9c9" /><path d="M19 1l-4 7h4l-3 6 7-8h-4l3-5z" fill="#c9c9c9" /></svg></SI>
          <SI w="w-[29px]"><svg width="24" height="26" viewBox="0 0 24 26" className="block"><path d="M12 1l3 14 8 11-11-4-11 4 8-11z" fill="#c9c9c9" /></svg></SI>
          <div className="ml-[8px] w-[33px] text-[17px] text-[#f0f3f6] text-center">1:1</div>
          <SC w="w-[18px]" />
        </Sg></div>
        <div className="ml-[6px]"><Sg w="w-[60px]">
          <SI w="w-[34px]"><svg width="26" height="26" viewBox="0 0 26 26" className="block"><circle cx="13" cy="13" r="7" stroke="#cfcfcf" strokeWidth="5" fill="none" /><path d="M13 1v5M13 20v5M1 13h5M20 13h5M4.500 4.500l3.500 3.500M18 18l3.500 3.500M21.500 4.500L18 8M8 18l-3.500 3.500" stroke="#cfcfcf" strokeWidth="4" /></svg></SI>
          <SC w="w-[26px]" />
        </Sg></div>
        <div className="ml-[2px]"><Sg w="w-[36px]"><SI w="w-[36px]"><svg width="24" height="24" viewBox="0 0 24 24" className="block"><path d="M12 0v24M0 12h24" stroke="#d9d9d9" strokeWidth="2.500" /></svg></SI></Sg></div>
        <div className="ml-[6px]"><Sg w="w-[146px]">
          <SI w="w-[32px]"><svg width="14" height="26" viewBox="0 0 14 26" className="block"><path d="M0 0h12v26H0z" fill="#d9d9d9" /><path d="M8 3h4M8 7h4M8 11h4M8 15h4M8 19h4M8 23h4" stroke="#3b4453" /></svg></SI>
          <div className="ml-[13px] w-[64px] text-[17px] text-[#f0f3f6]">Decimal</div>
          <div className="ml-auto mr-[6px]"><Caret w={12} c="#c9ccd1" /></div>
        </Sg></div>
        <div className="ml-[6px]"><Sg w="w-[36px]"><SI w="w-[36px]"><svg width="26" height="26" viewBox="0 0 26 26" className="block"><rect x="1" y="1" width="9" height="9" stroke={E} fill="none" /><circle cx="20" cy="12" r="5" stroke={E} fill="none" /><path d="M6 15l5 9H1z" stroke={E} fill="none" /></svg></SI></Sg></div>
        <div className="ml-[4px]"><Sg w="w-[44px]"><SI w="w-[44px]"><svg width="24" height="28" viewBox="0 0 24 28" className="block"><rect width="24" height="22" fill="#c9c9c9" /><path d="M1 14l6-8 6 12 6-10 5 6" stroke="#555" fill="none" /><rect x="5" y="3" width="4" height="4" fill={B} /><path d="M17 12l7 16H10z" fill="#f0a06c" /></svg></SI></Sg></div>
        <div className="ml-[4px]"><Sg w="w-[39px]"><SI w="w-[39px]"><svg width="26" height="22" viewBox="0 0 26 22" className="block"><rect x="1" y="1" width="24" height="20" stroke={E} strokeWidth="1.200" fill="none" /><path d="M15 10l6-6M21 9V4h-5M11 12l-6 6M5 13v5h5" stroke="#e6e6e6" strokeWidth="1.400" fill="none" /></svg></SI></Sg></div>
        <div className="ml-[2px] w-[26px] h-[36px] flex flex-col justify-center gap-[6px] shrink-0 bg-[#3b4453]">
          <div className="h-[3px] bg-[#e6e6e6]" /><div className="h-[3px] bg-[#e6e6e6]" /><div className="h-[3px] bg-[#e6e6e6]" />
        </div>
      </div>
    </div>
  );
}

export default function App() {
  return (
    <div className="w-[1920px] h-[1008px] overflow-hidden flex flex-col font-['Open_Sans',sans-serif]">
      <TitleBar />
      <TabRow />
      <Ribbon />
      <DocTabs />
      <div className="h-[6px] bg-[#3b4453] shrink-0" />
      <div className="relative h-[693px] bg-white shrink-0 overflow-hidden">
        <Canvas />
        <div className="absolute left-[2px] top-[6px] text-[17.2px] text-black whitespace-nowrap leading-[24px]">[−][Custom View][2D Wireframe]</div>
        <div className="absolute left-[1833px] top-[13px] flex items-center gap-[13px]">
          <div className="w-[17px] h-[7px] mt-[8px] border border-[#777777] bg-[#e4e4e4]" />
          <div className="w-[15px] h-[16px] border border-[#777777] bg-[#e4e4e4] flex items-center justify-center"><div className="w-[7px] h-[9px] border border-[#555555]" /></div>
          <svg width="16" height="16" viewBox="0 0 16 16" className="block"><rect width="16" height="16" fill="#e4e4e4" /><path d="M2 2l12 12M14 2L2 14" stroke="#555" strokeWidth="2" /></svg>
        </div>
        <div className="absolute left-[1807px] top-[201px] w-[68px] h-[24px] rounded-[4px] bg-[#eef0fa] flex items-center pl-[6px] text-[15px] text-[#a2a2a2] font-['Liberation_Sans',sans-serif]">WCS<svg width="11" height="8" viewBox="0 0 11 8" className="block ml-[9px]"><path d="M1 1h9L5.500 7z" fill="none" stroke="#bdbdbd" /></svg></div>
        <NavBar />
        <div className="absolute left-0 top-[655px] w-[1375px] h-[38px] bg-white/75 border-t-2 border-r border-t-[#6b7280] border-r-[#8b8f96] flex justify-end">
          <svg width="11" height="7" viewBox="0 0 11 7" className="block mt-[16px] mr-[6px]"><path d="M0 7h11L5.500 0z" fill="#8f8f8f" /></svg>
        </div>
      </div>
      <div className="h-[8px] bg-[#3b4453] shrink-0" />
      <StatusBar />
    </div>
  );
}
